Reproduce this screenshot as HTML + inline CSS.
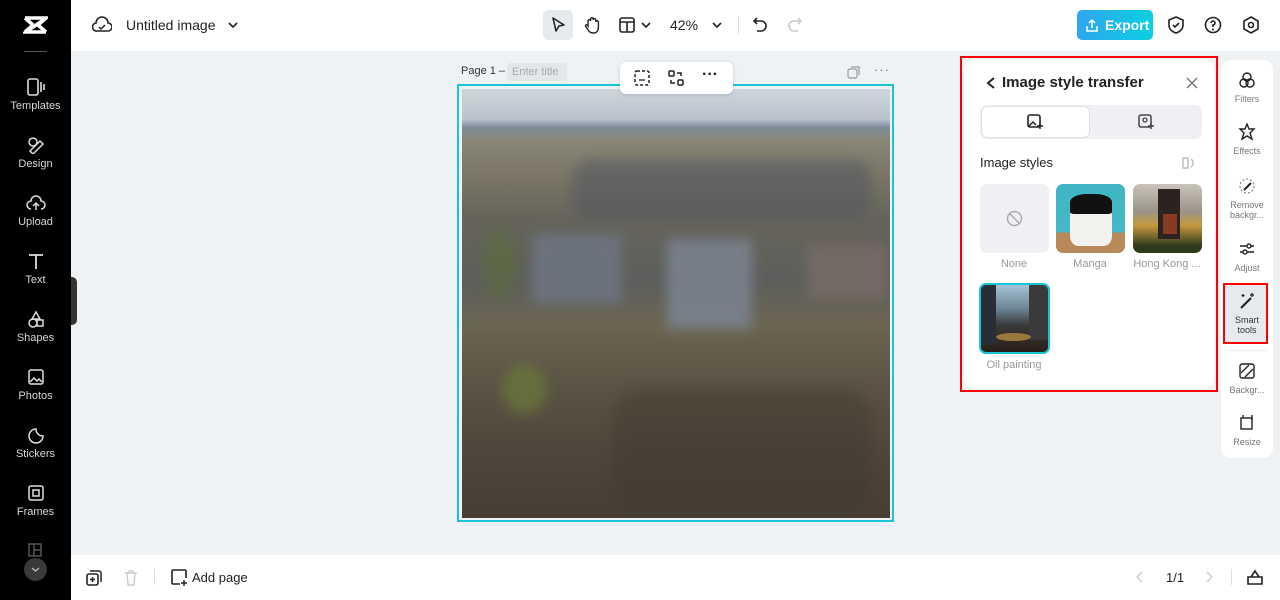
<!DOCTYPE html>
<html><head><meta charset="utf-8"><style>
*{box-sizing:border-box;margin:0;padding:0}
body{width:1280px;height:600px;overflow:hidden;background:#eff2f5;font-family:"Liberation Sans",sans-serif;position:relative;color:#1f2329}
.abs{position:absolute}
#side{left:0;top:0;width:71px;height:600px;background:#000}
.si{position:absolute;left:0;width:71px;text-align:center;color:#d8d8d8;font-size:11px}
.si svg{display:block;margin:0 auto 4px}
#top{left:71px;top:0;width:1209px;height:51px;background:#fff}
#bot{left:71px;top:555px;width:1209px;height:45px;background:#fff}
.rt{position:absolute;left:1221px;width:52px;text-align:center;font-size:9px;color:#777;line-height:10px}
.rt svg{display:block;margin:0 auto 5px}
.thumb{position:absolute;width:69px;height:69px;border-radius:7px;top:184px}
.cap{position:absolute;width:76px;text-align:center;font-size:11px;color:#999;top:258px}
.b{position:absolute;filter:blur(6px)}
</style></head><body>
<div id="side" class="abs">
 <svg class="abs" style="left:23px;top:15px" width="25" height="20" viewBox="0 0 25 20"><path d="M2 3h21L3 17h20M2 3l8 7M23 17l-8-7M23 3l-8 7M2 17l8-7" stroke="#fff" stroke-width="3.5" fill="none"/></svg>
 <div class="abs" style="left:24px;top:51px;width:23px;height:1px;background:#555"></div>
 <div class="si" style="top:78px"><svg width="20" height="18"><rect x="2" y="1" width="10" height="16" rx="2" stroke="#ddd" stroke-width="1.6" fill="none"/><path d="M15 4v10M18 6v6" stroke="#ddd" stroke-width="1.6"/></svg>Templates</div>
 <div class="si" style="top:136px"><svg width="20" height="18"><circle cx="7" cy="6" r="4" stroke="#ddd" stroke-width="1.5" fill="none"/><path d="M4 15l10-10 3 3-10 10z" stroke="#ddd" stroke-width="1.5" fill="none"/></svg>Design</div>
 <div class="si" style="top:194px"><svg width="20" height="18"><path d="M5 15a4 4 0 0 1 0-8 5 5 0 0 1 10 0 4 4 0 0 1 0 8M10 16V9M7 12l3-3 3 3" stroke="#ddd" stroke-width="1.5" fill="none"/></svg>Upload</div>
 <div class="si" style="top:252px"><svg width="20" height="18"><path d="M3 3h14M10 3v14" stroke="#ddd" stroke-width="1.8" fill="none"/></svg>Text</div>
 <div class="si" style="top:310px"><svg width="20" height="18"><path d="M10 2l4 7H6z" stroke="#ddd" stroke-width="1.5" fill="none"/><circle cx="7" cy="13" r="4" stroke="#ddd" stroke-width="1.5" fill="none"/><rect x="11" y="10" width="6" height="6" stroke="#ddd" stroke-width="1.5" fill="none"/></svg>Shapes</div>
 <div class="si" style="top:368px"><svg width="20" height="18"><rect x="3" y="2" width="14" height="14" rx="2" stroke="#ddd" stroke-width="1.5" fill="none"/><path d="M4 14l4-4 3 3 2-2 3 3" stroke="#ddd" stroke-width="1.5" fill="none"/></svg>Photos</div>
 <div class="si" style="top:426px"><svg width="20" height="18"><path d="M17 10a7 7 0 1 1-7-7c0 4 3 7 7 7z" stroke="#ddd" stroke-width="1.5" fill="none"/></svg>Stickers</div>
 <div class="si" style="top:484px"><svg width="20" height="18"><rect x="3" y="2" width="14" height="14" rx="2" stroke="#ddd" stroke-width="1.5" fill="none"/><rect x="7" y="6" width="6" height="6" stroke="#ddd" stroke-width="1.5" fill="none"/></svg>Frames</div>
 <svg class="abs" style="left:28px;top:543px" width="14" height="14"><rect x="1" y="1" width="12" height="12" stroke="#555" stroke-width="1.5" fill="none"/><path d="M6 1v12M6 7h7" stroke="#555" stroke-width="1.5"/></svg>
 <div class="abs" style="left:24px;top:558px;width:23px;height:23px;border-radius:50%;background:#3a3a3a"><svg width="23" height="23"><path d="M8 10l3.5 3 3.5-3" stroke="#bbb" stroke-width="1.3" fill="none"/></svg></div>
</div>
<div class="abs" style="left:71px;top:277px;width:6px;height:48px;background:#333;border-radius:0 5px 5px 0"></div>
<div id="top" class="abs">
 <svg class="abs" style="left:21px;top:16px" width="20" height="18"><path d="M5 15a4 4 0 0 1-1-8 6 6 0 0 1 12 0 4 4 0 0 1 0 8z" stroke="#222" stroke-width="1.6" fill="none"/><path d="M7 11l2 2 4-4" stroke="#222" stroke-width="1.5" fill="none"/></svg>
 <div class="abs" style="left:55px;top:17px;font-size:14px;color:#222">Untitled image</div>
 <svg class="abs" style="left:156px;top:20px" width="12" height="10"><path d="M2 3l4 4 4-4" stroke="#222" stroke-width="1.6" fill="none"/></svg>
 <div class="abs" style="left:472px;top:10px;width:30px;height:30px;background:#e6e9ee;border-radius:5px"></div>
 <svg class="abs" style="left:479px;top:16px" width="16" height="18"><path d="M3 2l11 7-5 1-3 5z" stroke="#222" stroke-width="1.6" fill="none" stroke-linejoin="round"/></svg>
 <svg class="abs" style="left:512px;top:15px" width="18" height="20"><path d="M5 11V6a1.3 1.3 0 0 1 2.6 0V4a1.3 1.3 0 0 1 2.6 0v1a1.3 1.3 0 0 1 2.6 0v2a1.3 1.3 0 0 1 2.6 0v5c0 4-2 6-5 6s-4-1-6-4l-2-3a1.3 1.3 0 0 1 2-1z" stroke="#222" stroke-width="1.4" fill="none"/></svg>
 <svg class="abs" style="left:548px;top:17px" width="16" height="16"><rect x="1" y="1" width="14" height="14" rx="2" stroke="#222" stroke-width="1.6" fill="none"/><path d="M1 5h14M8 5v10" stroke="#222" stroke-width="1.6"/></svg>
 <svg class="abs" style="left:569px;top:20px" width="12" height="10"><path d="M2 3l4 4 4-4" stroke="#222" stroke-width="1.6" fill="none"/></svg>
 <div class="abs" style="left:599px;top:17px;font-size:14px;color:#222">42%</div>
 <svg class="abs" style="left:640px;top:20px" width="12" height="10"><path d="M2 3l4 4 4-4" stroke="#222" stroke-width="1.6" fill="none"/></svg>
 <div class="abs" style="left:667px;top:16px;width:1px;height:18px;background:#ddd"></div>
 <svg class="abs" style="left:681px;top:16px" width="16" height="16"><path d="M5 2L2 5l3 3M2 5h7a5 5 0 0 1 0 10H5" stroke="#222" stroke-width="1.6" fill="none"/></svg>
 <svg class="abs" style="left:716px;top:16px" width="16" height="16"><path d="M11 2l3 3-3 3M14 5H7a5 5 0 0 0 0 10h4" stroke="#ccc" stroke-width="1.6" fill="none"/></svg>
 <div class="abs" style="left:1006px;top:10px;width:76px;height:30px;border-radius:5px;background:linear-gradient(90deg,#2fa6ee,#0ccfe0);color:#fff;font-weight:bold;font-size:14px;line-height:30px;padding-left:28px">Export</div>
 <svg class="abs" style="left:1014px;top:17px" width="14" height="16"><path d="M4 6l3-3 3 3M7 3v8M2 9v5h10V9" stroke="#fff" stroke-width="1.5" fill="none"/></svg>
 <svg class="abs" style="left:1096px;top:16px" width="18" height="18"><path d="M9 1l7 3v5c0 4-3 7-7 8-4-1-7-4-7-8V4z" stroke="#222" stroke-width="1.6" fill="none"/><path d="M6 9l2 2 4-4" stroke="#222" stroke-width="1.6" fill="none"/></svg>
 <svg class="abs" style="left:1133px;top:16px" width="18" height="18"><circle cx="9" cy="9" r="7.5" stroke="#222" stroke-width="1.6" fill="none"/><path d="M7 7a2 2 0 1 1 2 2v2" stroke="#222" stroke-width="1.6" fill="none"/><circle cx="9" cy="13.5" r="1" fill="#222"/></svg>
 <svg class="abs" style="left:1171px;top:16px" width="18" height="18"><path d="M9 1l7 4v8l-7 4-7-4V5z" stroke="#222" stroke-width="1.6" fill="none"/><circle cx="9" cy="9" r="2.5" stroke="#222" stroke-width="1.6" fill="none"/></svg>
</div>
<div class="abs" style="left:461px;top:65px;font-size:11px;color:#333">Page 1 –</div>
<div class="abs" style="left:507px;top:63px;width:60px;height:18px;background:#e3e6ea;border-radius:3px;font-size:11px;color:#aaa;line-height:18px;padding-left:5px">Enter title</div>
<svg class="abs" style="left:847px;top:66px" width="13" height="13"><rect x="1" y="3" width="9" height="9" rx="2" stroke="#999" stroke-width="1.2" fill="none"/><path d="M4 1h8v8" stroke="#999" stroke-width="1.2" fill="none"/></svg>
<div class="abs" style="left:874px;top:62px;font-size:13px;color:#777;letter-spacing:1px">···</div>
<div class="abs" style="left:457px;top:84px;width:437px;height:438px;border:2px solid #1bc3d6"></div>
<div class="abs" style="left:462px;top:89px;width:428px;height:429px;overflow:hidden;background:linear-gradient(180deg,#cfd5dc 0%,#bac3cc 7%,#7d8c98 9%,#8a8777 12%,#7b7666 20%,#66645a 30%,#5d5e5c 45%,#6b6552 55%,#5c5444 68%,#4e463a 85%,#463e33 100%)">
 <div class="b" style="left:110px;top:70px;width:300px;height:60px;background:#4e5560;opacity:.5;border-radius:20px"></div>
 <div class="b" style="left:70px;top:145px;width:90px;height:70px;background:#6e7682;opacity:.85"></div>
 <div class="b" style="left:205px;top:150px;width:85px;height:90px;background:#7b8491;opacity:.85"></div>
 <div class="b" style="left:345px;top:155px;width:80px;height:55px;background:#7a6e66;opacity:.75"></div>
 <div class="b" style="left:40px;top:275px;width:45px;height:50px;background:#6b7a3a;opacity:.7;border-radius:50%"></div>
 <div class="b" style="left:20px;top:140px;width:35px;height:70px;background:#5c6e3a;opacity:.6;border-radius:50%"></div>
 <div class="b" style="left:150px;top:300px;width:260px;height:120px;background:#3f382e;opacity:.4;border-radius:30px"></div>
</div>
<div class="abs" style="left:620px;top:62px;width:113px;height:32px;background:#fff;border-radius:6px;box-shadow:0 1px 4px rgba(0,0,0,.15)">
 <svg class="abs" style="left:14px;top:8px" width="16" height="16"><rect x="1" y="1" width="14" height="14" rx="2" stroke="#222" stroke-width="1.5" fill="none" stroke-dasharray="3 2"/><path d="M5 10l6 0" stroke="#222" stroke-width="1.3"/></svg>
 <svg class="abs" style="left:48px;top:8px" width="16" height="16"><rect x="1" y="1" width="5" height="5" rx="1" stroke="#222" stroke-width="1.5" fill="none"/><rect x="10" y="10" width="5" height="5" rx="1" stroke="#222" stroke-width="1.5" fill="none"/><path d="M9 3h4v3M7 13H3v-3" stroke="#222" stroke-width="1.5" fill="none"/></svg>
 <div class="abs" style="left:82px;top:4px;font-size:16px;font-weight:bold;color:#222">···</div>
</div>
<div class="abs" style="left:960px;top:56px;width:258px;height:336px;border:2px solid #f00"></div>
<div class="abs" style="left:964px;top:60px;width:250px;height:328px;background:#fff;border-radius:10px">
 <svg class="abs" style="left:21px;top:16px" width="12" height="14"><path d="M9 2L3 7l6 5" stroke="#222" stroke-width="2" fill="none"/></svg>
 <div class="abs" style="left:38px;top:14px;font-size:15px;font-weight:bold;color:#222">Image style transfer</div>
 <svg class="abs" style="left:221px;top:16px" width="14" height="14"><path d="M2 2l10 10M12 2L2 12" stroke="#777" stroke-width="1.4"/></svg>
 <div class="abs" style="left:16px;top:45px;width:222px;height:34px;background:#eef0f3;border-radius:7px"></div>
 <div class="abs" style="left:17px;top:46px;width:109px;height:32px;background:#fff;border-radius:6px;border:1px solid #dde0e4"></div>
 <svg class="abs" style="left:62px;top:53px" width="18" height="18"><rect x="2" y="2" width="12" height="12" rx="2" stroke="#222" stroke-width="1.6" fill="none"/><path d="M3 13l4-4 3 3" stroke="#222" stroke-width="1.5" fill="none"/><path d="M14 10v6M11 13h6" stroke="#222" stroke-width="1.5"/></svg>
 <svg class="abs" style="left:173px;top:53px" width="18" height="18"><rect x="2" y="2" width="12" height="12" rx="2" stroke="#444" stroke-width="1.5" fill="none"/><circle cx="8" cy="7" r="2" stroke="#444" stroke-width="1.3" fill="none"/><path d="M14 10v6M11 13h6" stroke="#444" stroke-width="1.5"/></svg>
 <div class="abs" style="left:16px;top:95px;font-size:13px;color:#222">Image styles</div>
 <svg class="abs" style="left:217px;top:96px" width="14" height="14"><path d="M2 2h5v10H2zM10 3a5 5 0 0 1 0 8" stroke="#bbb" stroke-width="1.4" fill="none"/></svg>
</div>
<div class="thumb" style="left:980px;background:#eef0f3"><svg width="69" height="69"><circle cx="34.5" cy="34.5" r="7" stroke="#aaa" stroke-width="1.4" fill="none"/><path d="M29.5 29.5l10 10" stroke="#aaa" stroke-width="1.4"/></svg></div>
<div class="thumb" style="left:1056px;overflow:hidden;background:linear-gradient(180deg,#3fb6c4 0,#45b9c6 70%,#b88a5a 70%)"><div class="abs" style="left:14px;top:12px;width:42px;height:50px;background:#f3f1ee;border-radius:40% 40% 20% 20%"></div><div class="abs" style="left:14px;top:10px;width:42px;height:20px;background:#111;border-radius:40% 40% 10% 10%"></div></div>
<div class="thumb" style="left:1133px;overflow:hidden;background:linear-gradient(180deg,#c9c4bb 0,#9b9489 40%,#c59a3e 60%,#2e3a1c 90%)"><div class="abs" style="left:25px;top:5px;width:22px;height:50px;background:#2a2320"></div><div class="abs" style="left:30px;top:30px;width:14px;height:20px;background:#8a3a20"></div></div>
<div class="thumb" style="left:979px;top:283px;width:71px;height:71px;border:2px solid #1bc3d6;overflow:hidden;background:linear-gradient(180deg,#a6c3d6 0,#6d8596 35%,#3a3a3a 60%,#2a1f17 100%)"><div class="abs" style="left:0;top:0;width:15px;height:60px;background:#2a2e34"></div><div class="abs" style="left:48px;top:0;width:21px;height:55px;background:#3a3a3c"></div><div class="abs" style="left:15px;top:48px;width:35px;height:8px;background:#9a7a3c;border-radius:50%"></div></div>
<div class="cap" style="left:976px">None</div>
<div class="cap" style="left:1052px">Manga</div>
<div class="cap" style="left:1129px">Hong Kong ...</div>
<div class="cap" style="left:976px;top:359px">Oil painting</div>
<div class="abs" style="left:1221px;top:60px;width:52px;height:398px;background:#fff;border-radius:10px"></div>
<div class="rt" style="top:71px"><svg width="18" height="18"><circle cx="9" cy="6" r="4" stroke="#222" stroke-width="1.4" fill="none"/><circle cx="6" cy="12" r="4" stroke="#222" stroke-width="1.4" fill="none"/><circle cx="12" cy="12" r="4" stroke="#222" stroke-width="1.4" fill="none"/></svg>Filters</div>
<div class="rt" style="top:123px"><svg width="18" height="18"><path d="M9 1l2 5 5 0-4 4 2 6-5-3-5 3 2-6-4-4 5 0z" stroke="#222" stroke-width="1.4" fill="none"/></svg>Effects</div>
<div class="rt" style="top:177px"><svg width="18" height="18"><circle cx="9" cy="9" r="7" stroke="#888" stroke-width="1.3" fill="none" stroke-dasharray="2 2"/><path d="M6 13l7-7" stroke="#222" stroke-width="2"/></svg>Remove<br>backgr...</div>
<div class="rt" style="top:240px"><svg width="18" height="18"><path d="M2 6h14M2 12h14" stroke="#222" stroke-width="1.4"/><circle cx="11" cy="6" r="2" fill="#fff" stroke="#222" stroke-width="1.4"/><circle cx="7" cy="12" r="2" fill="#fff" stroke="#222" stroke-width="1.4"/></svg>Adjust</div>
<div class="abs" style="left:1223px;top:283px;width:45px;height:61px;background:#e6e9ee;border:2px solid #f00"></div>
<div class="rt" style="top:292px;color:#333"><svg width="18" height="18"><path d="M3 16L13 6" stroke="#222" stroke-width="2.2"/><path d="M14 1v4M12 3h4M5 2v3M3.5 3.5h3" stroke="#222" stroke-width="1.3"/></svg>Smart<br>tools</div>
<div class="abs" style="left:1227px;top:350px;width:40px;height:1px;background:#eee"></div>
<div class="rt" style="top:362px"><svg width="18" height="18"><rect x="2" y="2" width="14" height="14" rx="2" stroke="#222" stroke-width="1.4" fill="none"/><path d="M3 11l8-8M7 15l8-8" stroke="#222" stroke-width="1.3"/></svg>Backgr...</div>
<div class="rt" style="top:414px"><svg width="18" height="18"><rect x="3" y="4" width="11" height="11" stroke="#222" stroke-width="1.4" fill="none"/><path d="M14 1v5M5 1v3" stroke="#222" stroke-width="1.4"/></svg>Resize</div>
<div id="bot" class="abs">
 <svg class="abs" style="left:14px;top:14px" width="18" height="18"><rect x="2" y="5" width="11" height="11" rx="2" stroke="#222" stroke-width="1.6" fill="none"/><path d="M5 2h9a2 2 0 0 1 2 2v9M7.5 8v5M5 10.5h5" stroke="#222" stroke-width="1.5" fill="none"/></svg>
 <svg class="abs" style="left:52px;top:14px" width="16" height="18"><path d="M2 4h12M6 4V2h4v2M4 4l1 12h6l1-12" stroke="#ccc" stroke-width="1.4" fill="none"/></svg>
 <div class="abs" style="left:83px;top:14px;width:1px;height:16px;background:#ddd"></div>
 <svg class="abs" style="left:99px;top:13px" width="18" height="18"><path d="M10 16H3a1 1 0 0 1-1-1V3a1 1 0 0 1 1-1h12a1 1 0 0 1 1 1v7" stroke="#222" stroke-width="1.6" fill="none"/><path d="M14 12v6M11 15h6" stroke="#222" stroke-width="1.5"/></svg>
 <div class="abs" style="left:121px;top:15px;font-size:13px;color:#222">Add page</div>
 <svg class="abs" style="left:1064px;top:15px" width="10" height="14"><path d="M7 2L2 7l5 5" stroke="#ccc" stroke-width="1.4" fill="none"/></svg>
 <div class="abs" style="left:1095px;top:15px;font-size:13px;color:#222">1/1</div>
 <svg class="abs" style="left:1133px;top:15px" width="10" height="14"><path d="M3 2l5 5-5 5" stroke="#ccc" stroke-width="1.4" fill="none"/></svg>
 <div class="abs" style="left:1160px;top:14px;width:1px;height:16px;background:#ddd"></div>
 <svg class="abs" style="left:1175px;top:13px" width="18" height="18"><path d="M2 9h14v7H2zM5 9l4-6 4 6" stroke="#222" stroke-width="1.6" fill="none"/></svg>
</div>
</body></html>
